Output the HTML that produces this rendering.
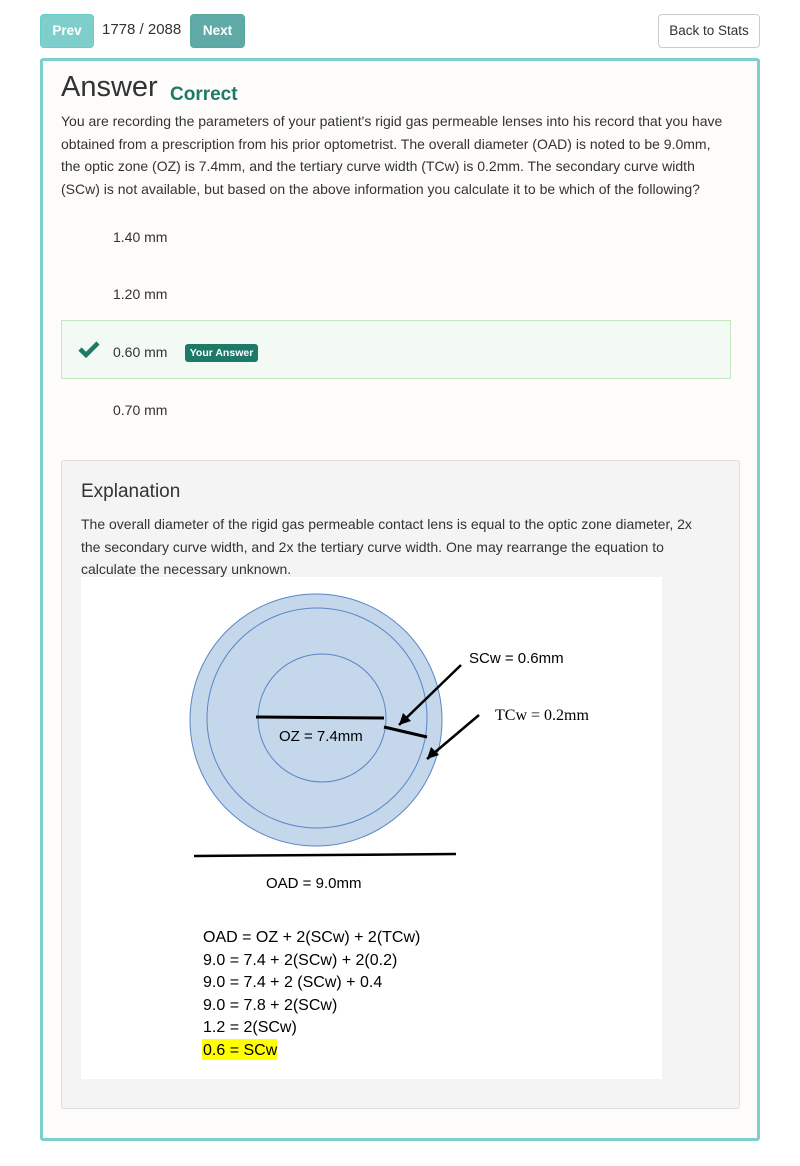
<!DOCTYPE html>
<html><head><meta charset="utf-8"><style>
body{margin:0;width:800px;height:1166px;background:#fff;font-family:"Liberation Sans",sans-serif;color:#333;position:relative}
.btn{position:absolute;top:14px;height:32px;border-radius:4px;color:#fff;font-weight:bold;font-size:13.5px;line-height:32px;text-align:center}
.card{position:absolute;left:40px;top:58px;width:714px;height:1077px;border:3px solid #7ecfcc;border-radius:3px;background:#fdfcfa}
.q{position:absolute;left:61px;top:110px;font-size:14px;line-height:22.5px;white-space:nowrap}
.opt{position:absolute;left:113px;font-size:14px}
.exp{position:absolute;left:61px;top:460px;width:677px;height:647px;background:#f4f4f4;border:1px solid #ddd;border-radius:3px}
</style></head><body>
<div class="btn" style="left:40px;width:52px;background:#7ecfcc;border:1px solid #6cc">Prev</div>
<div style="position:absolute;left:102px;top:21px;font-size:15px">1778 / 2088</div>
<div class="btn" style="left:190px;width:53px;background:#5fa9a6;border:1px solid #5a9">Next</div>
<div style="position:absolute;left:658px;top:14px;width:100px;height:32px;border:1px solid #ccc;border-radius:4px;font-size:13.5px;line-height:32px;text-align:center;color:#333">Back to Stats</div>
<div class="card"></div>
<div style="position:absolute;left:61px;top:71px;font-size:29px">Answer</div>
<div style="position:absolute;left:170px;top:84px;font-size:19px;font-weight:bold;color:#1e7a68">Correct</div>
<div class="q">You are recording the parameters of your patient's rigid gas permeable lenses into his record that you have<br>obtained from a prescription from his prior optometrist. The overall diameter (OAD) is noted to be 9.0mm,<br>the optic zone (OZ) is 7.4mm, and the tertiary curve width (TCw) is 0.2mm. The secondary curve width<br>(SCw) is not available, but based on the above information you calculate it to be which of the following?</div>
<div class="opt" style="top:229px">1.40 mm</div>
<div class="opt" style="top:286px">1.20 mm</div>
<div style="position:absolute;left:61px;top:320px;width:668px;height:57px;background:#f3faf3;border:1px solid #c6e6c0"></div>
<svg style="position:absolute;left:78px;top:340px" width="22" height="18"><path d="M2 9 L8 15 L20 3" stroke="#1e7a68" stroke-width="4.5" fill="none"/></svg>
<div class="opt" style="top:344px">0.60 mm</div>
<div style="position:absolute;left:185px;top:344px;width:73px;height:18px;background:#1e7a68;border-radius:3px;color:#fff;font-size:10.5px;font-weight:bold;line-height:18px;text-align:center">Your Answer</div>
<div class="opt" style="top:402px">0.70 mm</div>
<div class="exp"></div>
<div style="position:absolute;left:81px;top:481px;font-size:19px">Explanation</div>
<div style="position:absolute;left:81px;top:513px;font-size:14px;line-height:22.5px;white-space:nowrap">The overall diameter of the rigid gas permeable contact lens is equal to the optic zone diameter, 2x<br>the secondary curve width, and 2x the tertiary curve width. One may rearrange the equation to<br>calculate the necessary unknown.</div>
<svg style="position:absolute;left:81px;top:577px" width="581" height="502">
<rect width="581" height="502" fill="#fff"/>
<circle cx="235" cy="143" r="126" fill="#c5d7ea" stroke="#5a86c5"/>
<circle cx="236" cy="141" r="110" fill="#c5d7ea" stroke="#5a86c5"/>
<circle cx="241" cy="141" r="64" fill="#c5d7ea" stroke="#5a86c5"/>
<line x1="175" y1="140" x2="303" y2="141" stroke="#000" stroke-width="3"/>
<line x1="303" y1="150" x2="346" y2="160" stroke="#000" stroke-width="3"/>
<line x1="380" y1="88" x2="318" y2="148" stroke="#000" stroke-width="2.5"/>
<path d="M318 148 l4 -12 l8 8 z" fill="#000"/>
<line x1="398" y1="138" x2="346" y2="182" stroke="#000" stroke-width="2.5"/>
<path d="M346 182 l4 -12 l8 8 z" fill="#000"/>
<line x1="113" y1="279" x2="375" y2="277" stroke="#000" stroke-width="2.5"/>
<g font-family="Liberation Sans,sans-serif" font-size="15" fill="#000">
<text x="198" y="164">OZ = 7.4mm</text>
<text x="388" y="86">SCw = 0.6mm</text>
<text x="414" y="143" font-family="Liberation Serif,serif" font-size="16">TCw = 0.2mm</text>
<text x="185" y="311">OAD = 9.0mm</text>
<rect x="121" y="462" width="75" height="21" fill="#ff0"/>
<g font-size="16">
<text x="122" y="365">OAD = OZ + 2(SCw) + 2(TCw)</text>
<text x="122" y="388">9.0 = 7.4 + 2(SCw) + 2(0.2)</text>
<text x="122" y="410">9.0 = 7.4 + 2 (SCw) + 0.4</text>
<text x="122" y="433">9.0 = 7.8 + 2(SCw)</text>
<text x="122" y="455">1.2 = 2(SCw)</text>
<text x="122" y="478">0.6 = SCw</text>
</g></g></svg>
</body></html>
